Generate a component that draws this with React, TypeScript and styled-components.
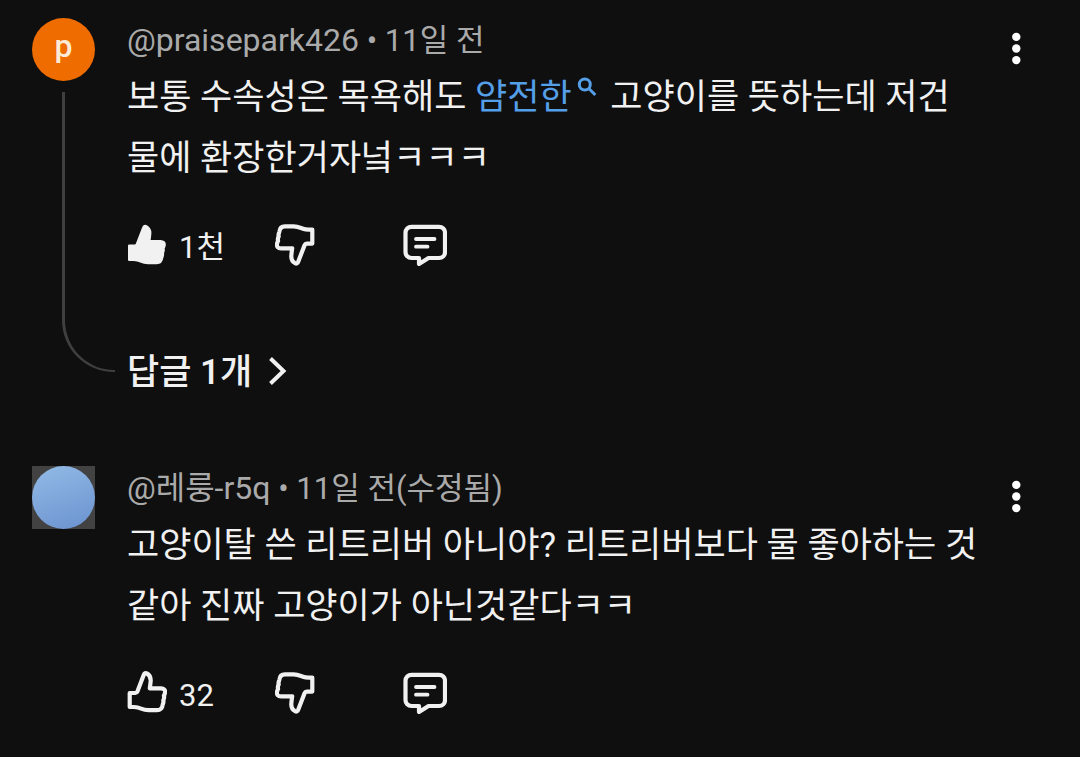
import React from "react";
import styled, { createGlobalStyle, css } from "styled-components";

const GlobalStyle = createGlobalStyle`
  * { box-sizing: border-box; }
  html { background: #0f0f0f; }
  body {
    margin: 0;
    background: #0f0f0f;
    color: #f1f1f1;
    font-family: Roboto, "Noto Sans CJK KR", sans-serif;
  }
  button {
    margin: 0;
    padding: 0;
    border: 0;
    background: none;
    color: inherit;
    font: inherit;
    cursor: pointer;
  }
  svg { display: block; flex: none; }
`;

const Thread = styled.main`
  width: 100%;
`;

const Comment = styled.article`
  display: flex;
  align-items: stretch;
  padding: 18px 32px 0;
  min-height: 448px;

  &:last-child {
    min-height: 0;
    padding-bottom: 40px;
  }
`;

const Rail = styled.div`
  display: flex;
  flex-direction: column;
  flex: none;
  width: 95px;
`;

const avatarBox = css`
  flex: none;
  width: 63px;
  height: 63px;
`;

const LetterAvatar = styled.div`
  ${avatarBox}
  display: flex;
  align-items: center;
  justify-content: center;
  border-radius: 50%;
  background: #ef6c00;
  color: #fdebd6;
  font-size: 32px;
  font-weight: 500;
  line-height: 56px;
  padding-bottom: 8px;
`;

const PictureAvatar = styled.div`
  ${avatarBox}
  background: #424242;

  &::before {
    content: "";
    display: block;
    width: 100%;
    height: 100%;
    border-radius: 50%;
    background: linear-gradient(160deg, #92bbe6, #6b92cf);
  }
`;

const ReplyLine = styled.div`
  flex: 1;
  width: 53px;
  margin: 11px 0 76px 30px;
  border-left: 3px solid #3f3f3f;
  border-bottom: 2px solid #3f3f3f;
  border-bottom-left-radius: 52px;
`;

const Content = styled.div`
  flex: 1;
  min-width: 0;
`;

const Meta = styled.header`
  height: 49px;
  color: #aaaaaa;
  font-size: 31px;
  line-height: 44px;
  white-space: nowrap;
`;

const Handle = styled.span`
  font-size: 32px;
`;

const Body = styled.p`
  margin: 0;
  font-size: 35px;
  line-height: 61px;
  word-break: keep-all;
`;

const SearchLink = styled.a`
  color: #559fe8;
  text-decoration: none;
  margin-right: 5px;

  svg {
    display: inline-block;
    margin-left: 5px;
    vertical-align: 12px;
  }
`;

const Actions = styled.div`
  display: grid;
  grid-template-columns: 148px 128px auto;
  justify-content: start;
  margin-top: 33px;
`;

const Action = styled.button`
  display: flex;
  align-items: center;
  gap: 12px;
  height: 44px;
  font-size: 31px;
  line-height: 36px;
`;

const Count = styled.span`
  padding-top: 8px;
`;

const Replies = styled.button`
  display: flex;
  align-items: center;
  gap: 16px;
  height: 50px;
  margin-top: 80px;
  font-size: 35px;
  font-weight: 500;
  line-height: 46px;

  span { padding-top: 4px; }
`;

const MenuButton = styled.button`
  flex: none;
  align-self: flex-start;
  display: flex;
  justify-content: flex-end;
  width: 60px;
  padding: 10px 26px 10px 0;
`;

const thumb =
  "M2.700 23H8.300Q9.800 23 10.400 21.500L16.900 4.600C17.400 3.200 18.600 2.700 19.800 3.400C22.300 4.800 23.800 7.200 23.700 10.500Q23.600 12.500 22.800 18.300H34C37 18.300 38.600 20.200 38 22.800Q37.700 24.300 36.900 25.600Q37.600 28 36.300 30.200Q36.800 32.200 35.700 34.600C35.300 38.500 33.600 40.200 30 40.200H21.500C17.500 40.200 15 39 12 37.900Q9.500 37 6.500 37H2.700Z";

const ThumbIcon = ({ filled, down }: { filled?: boolean; down?: boolean }) => (
  <svg width="40" height="44" viewBox="0 0 40 44" aria-hidden="true">
    <path
      d={thumb}
      transform={down ? "rotate(180 20 22.300)" : filled ? "translate(-0.500 0.800)" : undefined}
      fill={filled ? "#f1f1f1" : "none"}
      stroke="#f1f1f1"
      strokeWidth={filled ? 2.4 : 4.2}
      strokeLinejoin="round"
    />
  </svg>
);

const ChatIcon = () => (
  <svg width="44" height="44" viewBox="0 0 44 44" fill="none" stroke="#f1f1f1" strokeWidth="4.200" strokeLinejoin="round" strokeLinecap="round" aria-hidden="true">
    <path d="M8.500 4.800H36C39.500 4.800 42 7.300 42 10.800V30C42 33.500 39.500 36 36 36H25.500L16 42V36H8.500C5 36 2.500 33.500 2.500 30V10.800C2.500 7.300 5 4.800 8.500 4.800Z" />
    <path d="M13 17H31.500M13 24.700H24.500" strokeWidth="3.800" />
  </svg>
);

const SearchIcon = () => (
  <svg width="20" height="20" viewBox="0 0 20 20" fill="none" stroke="#559fe8" strokeWidth="3" aria-hidden="true">
    <circle cx="7.800" cy="7.500" r="5.500" />
    <path d="M11.800 11.500L18.300 18" />
  </svg>
);

const ChevronIcon = () => (
  <svg width="20" height="30" viewBox="0 0 20 30" fill="none" stroke="#f1f1f1" strokeWidth="4" aria-hidden="true">
    <path d="M2.500 2.500L15.500 15L2.500 27.500" />
  </svg>
);

const DotsIcon = () => (
  <svg width="12" height="40" viewBox="0 0 12 40" fill="#ffffff" aria-hidden="true">
    <circle cx="6.300" cy="8.900" r="4.200" />
    <circle cx="6.300" cy="20.500" r="4.200" />
    <circle cx="6.300" cy="32.100" r="4.200" />
  </svg>
);

interface ItemProps {
  avatar: React.ReactNode;
  handle: string;
  time: string;
  likes: string;
  liked?: boolean;
  replies?: string;
  children: React.ReactNode;
}

const CommentItem = ({ avatar, handle, time, likes, liked, replies, children }: ItemProps) => (
  <Comment>
    <Rail>
      {avatar}
      {replies && <ReplyLine />}
    </Rail>
    <Content>
      <Meta>
        <Handle>{handle}</Handle> • {time}
      </Meta>
      <Body>{children}</Body>
      <Actions>
        <Action aria-label={`좋아요 ${likes}`} aria-pressed={!!liked}>
          <ThumbIcon filled={liked} />
          <Count>{likes}</Count>
        </Action>
        <Action aria-label="싫어요">
          <ThumbIcon down />
        </Action>
        <Action aria-label="답글 달기">
          <ChatIcon />
        </Action>
      </Actions>
      {replies && (
        <Replies>
          <span>{replies}</span>
          <ChevronIcon />
        </Replies>
      )}
    </Content>
    <MenuButton aria-label="더보기">
      <DotsIcon />
    </MenuButton>
  </Comment>
);

export default function App() {
  return (
    <>
      <GlobalStyle />
      <Thread>
        <CommentItem
          avatar={<LetterAvatar>p</LetterAvatar>}
          handle="@praisepark426"
          time="11일 전"
          likes="1천"
          liked
          replies="답글 1개"
        >
          보통 수속성은 목욕해도{" "}
          <SearchLink href="#search">
            얌전한
            <SearchIcon />
          </SearchLink>{" "}
          고양이를 뜻하는데 저건 물에 환장한거자넠ㅋㅋㅋ
        </CommentItem>
        <CommentItem
          avatar={<PictureAvatar />}
          handle="@레룽-r5q"
          time="11일 전(수정됨)"
          likes="32"
        >
          고양이탈 쓴 리트리버 아니야? 리트리버보다 물 좋아하는 것 같아 진짜 고양이가 아닌것같다ㅋㅋ
        </CommentItem>
      </Thread>
    </>
  );
}
